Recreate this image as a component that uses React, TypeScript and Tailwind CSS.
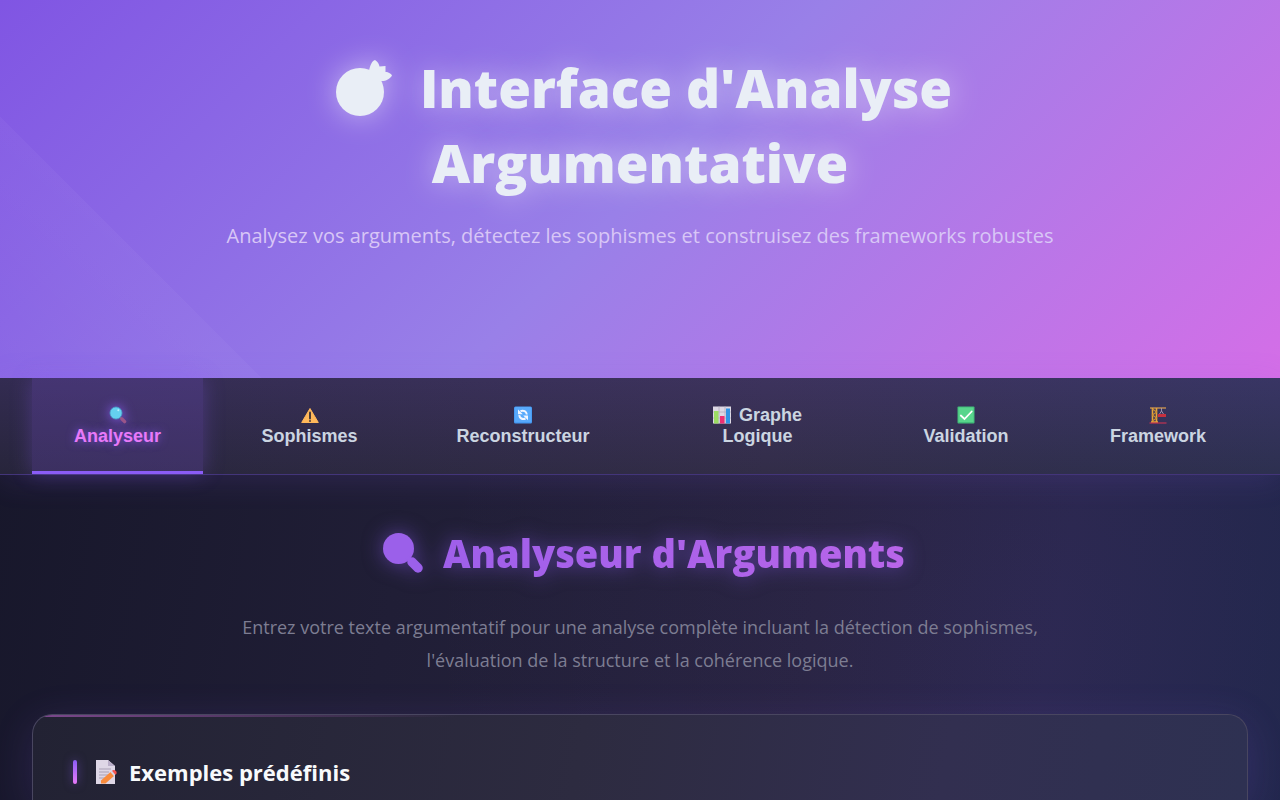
import type { ReactNode } from "react";

type IconProps = { className?: string };

function FruitIcon({ className }: IconProps) {
  return (
    <svg viewBox="0 0 56 58" className={className} fill="currentColor" aria-hidden="true">
      <circle cx="24" cy="33" r="24" />
      <path d="M33 12C34 6 36 2 39 1c3 2 4 4 4.500 6.500l6-.5v6c3 0 6 2 6.500 3.500C54 20 50 22 46 22l-7 2-7-8z" />
    </svg>
  );
}

function LensShape({ className }: IconProps) {
  return (
    <svg viewBox="0 0 40 40" className={className} aria-hidden="true">
      <circle cx="15.500" cy="15.500" r="15.500" fill="#9b60ea" />
      <path d="M24 24l6 6" stroke="#9b60ea" strokeWidth="4" />
      <path d="M29 29l6 6" stroke="#9b60ea" strokeWidth="9.500" strokeLinecap="round" />
    </svg>
  );
}

function LensIcon() {
  return (
    <svg viewBox="0 0 18 18" className="size-[18px] drop-shadow-[0_0_6px_#8b5cf6]" aria-hidden="true">
      <path d="M11 11l2.500 2.500" stroke="#7d6087" strokeWidth="2" />
      <path d="M13 13l2.600 2.600" stroke="#9a5589" strokeWidth="3.400" strokeLinecap="round" />
      <circle cx="7" cy="7" r="6" fill="#64d0ef" stroke="#4a9ec6" strokeWidth=".8" />
      <circle cx="9.300" cy="4.300" r="1" fill="#b9efff" />
    </svg>
  );
}

function WarningIcon() {
  return (
    <svg viewBox="0 0 18 18" className="size-[18px]" aria-hidden="true">
      <path d="M9 2.500L17.300 16.500H.7z" fill="#ffb85a" stroke="#ffb85a" strokeLinejoin="round" />
      <path d="M9 6.500v6" stroke="#4b3b38" strokeWidth="2" strokeLinecap="round" />
      <circle cx="9" cy="15" r="1" fill="#4b3b38" />
    </svg>
  );
}

function RefreshIcon() {
  return (
    <svg viewBox="0 0 18 18" className="size-[18px]" aria-hidden="true">
      <rect width="18" height="17" y=".5" rx="1.500" fill="#489cf4" />
      <rect x="1" y="1" width="16" height="15" rx="1" fill="#58a9fb" />
      <g fill="none" stroke="#f3f6ff" strokeWidth="2">
        <path d="M6.500 5.200c3-1.400 6 .3 6.300 3.300" />
        <path d="M11.500 12.500c-3 1.400-6-.3-6.300-3.300" />
      </g>
      <path d="M4 3.500v4.800h4.800zM14 14.200V9.400H9.200z" fill="#f3f6ff" />
    </svg>
  );
}

function ChartIcon() {
  return (
    <svg viewBox="0 0 18 18" className="size-[18px]" aria-hidden="true">
      <rect y=".5" width="18" height="17" fill="#ddd8e4" />
      <path d="M0 6h18M0 12h18M6 .5v17M12 .5v17" stroke="#b4adbf" strokeWidth=".8" />
      <rect x="1" y="5" width="4.500" height="12.500" fill="#9bdc63" />
      <rect x="7" y="10" width="4.500" height="7.500" fill="#ee2f73" />
      <rect x="13" y="2.500" width="4" height="15" fill="#2f94e6" />
    </svg>
  );
}

function CheckIcon() {
  return (
    <svg viewBox="0 0 18 18" className="size-[18px]" aria-hidden="true">
      <rect x=".5" y=".5" width="17" height="17" rx="1" fill="#42bd7a" />
      <rect x="1.500" y="1.500" width="15" height="14.500" rx=".5" fill="#58d58c" />
      <path d="M3.800 9.500l3.700 3.500 7.200-7.500" fill="none" stroke="#fff" strokeWidth="1.800" strokeLinecap="round" />
    </svg>
  );
}

function CraneIcon() {
  return (
    <svg viewBox="0 0 18 18" className="size-[18px]" aria-hidden="true">
      <path d="M1 2h16" stroke="#e0a04c" strokeWidth="1.200" />
      <path d="M3.500 2v14M7.500 2v14M2 16h7" stroke="#e5a53a" strokeWidth="1.600" />
      <path d="M3.500 3l4 3-4 3 4 3-4 3" fill="none" stroke="#c98c32" strokeWidth="1.200" />
      <path d="M12.500 2v3l-2 3m2-3l2 3" fill="none" stroke="#a698b5" strokeWidth=".9" />
      <rect x="8.800" y="8" width="8.200" height="3" fill="#c5303f" />
      <path d="M.5 17h17" stroke="#dd3350" strokeWidth="1" />
    </svg>
  );
}

function MemoIcon() {
  return (
    <svg viewBox="0 0 22 24" className="h-6 w-[22px]" aria-hidden="true">
      <path d="M1 0h12l7 6v18H1z" fill="#ded7e6" />
      <path d="M13 0v6h7z" fill="#b9aec8" />
      <path d="M4 9h12M4 12h10M4 15h9M4 18h6" stroke="#a9a0b5" strokeWidth="1" />
      <path d="M6 20.500L15.500 12l3.500 4-8.500 7.500H6z" fill="#f98b3c" />
      <path d="M15.500 12l1.500-1.300 3.300 4L19 16z" fill="#d8d2df" />
      <path d="M17 10.700c1.500-1.300 3-.8 4 .5s1 2.500-.7 3.500z" fill="#f4524d" />
    </svg>
  );
}

type Tab = { label: ReactNode; icon: ReactNode; active?: boolean };

const tabs: Tab[] = [
  { label: "Analyseur", icon: <LensIcon />, active: true },
  { label: "Sophismes", icon: <WarningIcon /> },
  { label: "Reconstructeur", icon: <RefreshIcon /> },
  { label: "Logique", icon: <><ChartIcon /><span>Graphe</span></> },
  { label: "Validation", icon: <CheckIcon /> },
  { label: "Framework", icon: <CraneIcon /> },
];

function TabButton({ label, icon, active }: Tab) {
  const tone = active
    ? "border-[#8b5cf6] bg-[#8b5cf6]/20 text-[#e879f9] shadow-[0_0_20px_rgba(139,92,246,0.3)] [text-shadow:0_0_10px_rgba(139,92,246,0.8)]"
    : "border-transparent text-[#cbd5e1]";
  return (
    <button
      type="button"
      role="tab"
      aria-selected={!!active}
      className={`flex h-24 flex-col items-center justify-center border-b-[3px] pt-0.5 font-['Liberation_Sans',sans-serif] text-lg leading-[21px] font-bold ${tone}`}
    >
      <span className="flex h-[21px] items-center gap-2">{icon}</span>
      <span>{label}</span>
    </button>
  );
}

export default function App() {
  return (
    <div className="flex min-h-screen flex-col bg-[radial-gradient(circle_at_80%_80%,rgba(139,92,246,0.05),transparent_50%),linear-gradient(100deg,#161629_0%,#201e36_35%,#27233f_65%,#28264a_82%,#202649_100%)] font-['Open_Sans','Noto_Sans',sans-serif]">
      <header className="bg-[linear-gradient(45deg,transparent,rgba(255,255,255,0.03)_185px,transparent_185px),linear-gradient(135deg,#8055e3_0%,#9980e8_50%,#d46ee7_100%)] px-8 pt-[50px] pb-[124px] text-center">
        <h1 className="mx-auto max-w-[800px] text-[53px] leading-[75px] font-extrabold text-[#e9eef6] [text-shadow:0_0_30px_rgba(255,255,255,0.5)]">
          <FruitIcon className="mr-7 ml-2 inline-block h-[58px] w-14 align-[-9px] drop-shadow-[0_0_15px_rgba(255,255,255,0.5)]" />
          Interface d'Analyse Argumentative
        </h1>
        <p className="mt-[18px] text-[20px] leading-9 text-[#d8c6f6]">
          Analysez vos arguments, détectez les sophismes et construisez des frameworks robustes
        </p>
      </header>

      <nav className="relative border-b border-[#43357a] bg-[linear-gradient(180deg,rgba(139,92,246,0.12),transparent),linear-gradient(90deg,#27253b,#322d48_60%,#2d3050)] px-8 shadow-[0_4px_30px_rgba(139,92,246,0.15)]">
        <div role="tablist" className="grid grid-cols-[171fr_171fr_214fr_213fr_162fr_180fr] gap-[21px]">
          {tabs.map((tab, index) => (
            <TabButton key={index} {...tab} />
          ))}
        </div>
      </nav>

      <main className="flex flex-1 flex-col px-8 pt-12">
        <h2 className="flex items-center justify-center gap-5 pl-2 text-[38px] leading-[60px] font-extrabold drop-shadow-[0_0_10px_rgba(139,92,246,0.5)]">
          <LensShape className="size-10" />
          <span className="bg-linear-to-r from-[#9f5fea] to-[#b865e9] bg-clip-text text-transparent">Analyseur d'Arguments</span>
        </h2>
        <p className="mx-auto mt-7 max-w-[820px] text-center text-[18px] leading-[33px] text-[#7d7d92]">
          Entrez votre texte argumentatif pour une analyse complète incluant la détection de sophismes, l'évaluation de la structure et la cohérence logique.
        </p>

        <section className="relative mt-[37px] flex-1 overflow-hidden rounded-t-[20px] border border-b-0 border-[#494660] bg-[linear-gradient(100deg,#222233,#2d2b40_45%,#322f50_75%,#2e3152)] px-10 pt-10 pb-2 shadow-[0_8px_40px_rgba(139,92,246,0.15)]">
          <div className="absolute inset-x-0 top-0 h-0.5 bg-linear-to-r from-[#7d488e] to-transparent to-35%" />
          <h3 className="flex items-center text-[22px] leading-[34px] font-bold text-[#f8fafc]">
            <span className="mr-[18px] h-6 w-1 rounded-sm bg-linear-to-b from-[#8b5cf6] to-[#e879f9] shadow-[0_0_10px_rgba(139,92,246,0.5)]" />
            <MemoIcon />
            <span className="ml-3">Exemples prédéfinis</span>
          </h3>
        </section>
      </main>
    </div>
  );
}
